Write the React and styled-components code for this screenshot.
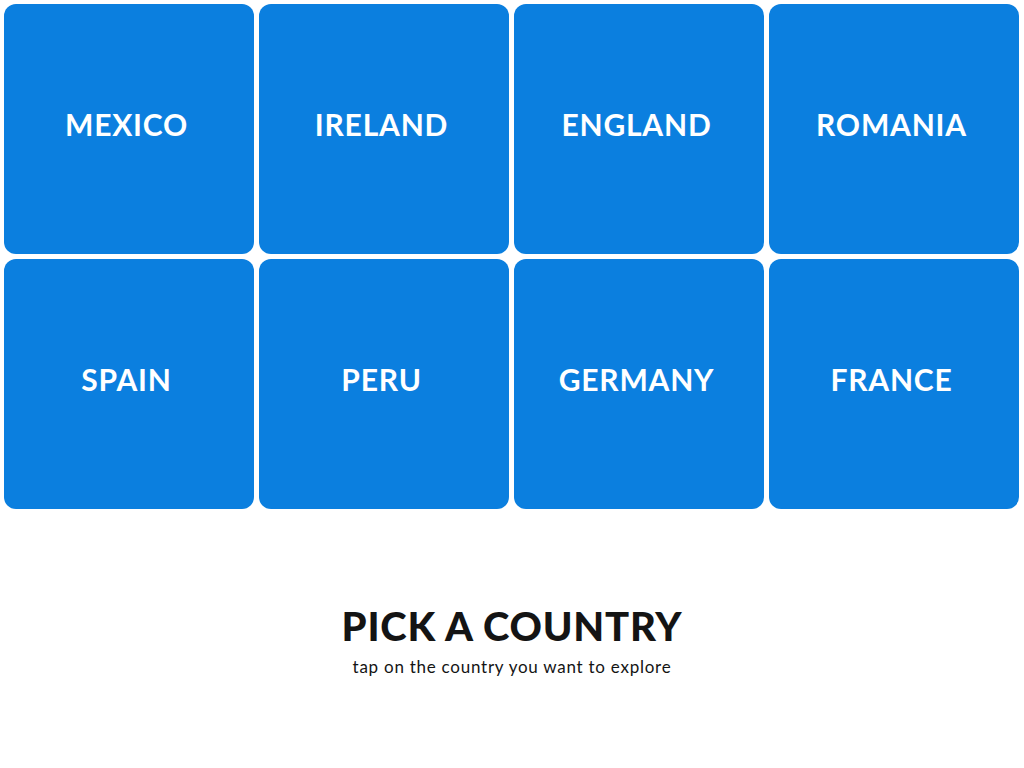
import styled, { createGlobalStyle } from "styled-components";

const countries = ["MEXICO", "IRELAND", "ENGLAND", "ROMANIA", "SPAIN", "PERU", "GERMANY", "FRANCE"];

const GlobalStyle = createGlobalStyle`
  html, body {
    margin: 0;
    padding: 0;
    background: #fff;
  }
  body {
    font-family: Lato, "Open Sans", sans-serif;
  }
`;

export default function App() {
    return (
        <Page>
            <GlobalStyle />
            <Grid>
                {countries.map(name => (
                    <Tile key={name}>{name}</Tile>
                ))}
            </Grid>
            <Intro>
                <h1>PICK A COUNTRY</h1>
                <p>tap on the country you want to explore</p>
            </Intro>
        </Page>
    );
}

const Page = styled.div`
    width: 1024px;
    height: 768px;
    display: flex;
    flex-direction: column;
`;

const Grid = styled.div`
    display: grid;
    grid-template-columns: repeat(4, 250px);
    grid-auto-rows: 250px;
    gap: 5px;
    padding: 4px 5px 0 4px;
`;

const Tile = styled.div`
    background: #0b7fdf;
    border-radius: 12px;
    display: flex;
    align-items: center;
    justify-content: center;
    padding: 0 5px 11px 0;
    box-sizing: border-box;
    color: #fff;
    font-weight: 700;
    font-size: 30px;
    letter-spacing: 0.8px;
`;

const Intro = styled.div`
    margin-top: 94px;
    text-align: center;
    color: #141414;

    h1 {
        margin: 0;
        font-size: 40px;
        font-weight: 900;
        line-height: 46px;
        letter-spacing: 0.8px;
    }
    p {
        margin: 7px 0 0;
        font-size: 17px;
        line-height: 22px;
        letter-spacing: 0.75px;
    }
`;
